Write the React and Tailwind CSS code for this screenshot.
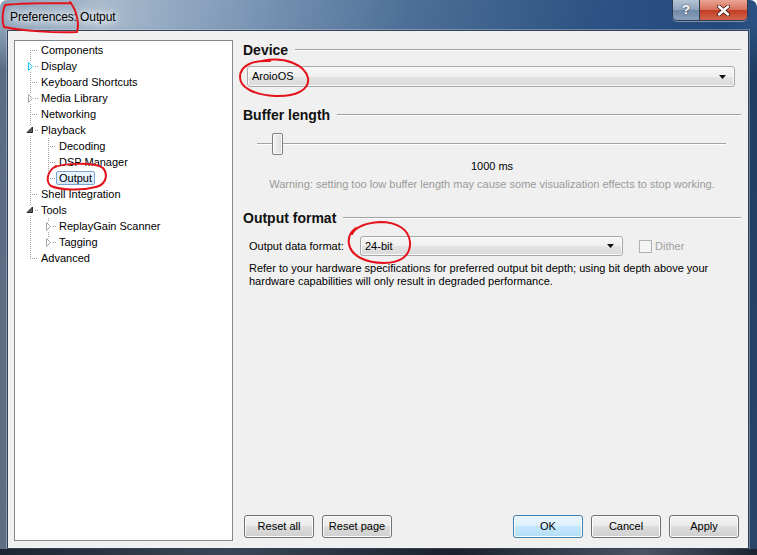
import React from 'react';

const treeRows = [
  { label: 'Components', level: 0, first: true },
  { label: 'Display', level: 0, exp: 'hover' },
  { label: 'Keyboard Shortcuts', level: 0 },
  { label: 'Media Library', level: 0, exp: 'closed' },
  { label: 'Networking', level: 0 },
  { label: 'Playback', level: 0, exp: 'open' },
  { label: 'Decoding', level: 1 },
  { label: 'DSP Manager', level: 1 },
  { label: 'Output', level: 1, lastChild: true, selected: true },
  { label: 'Shell Integration', level: 0 },
  { label: 'Tools', level: 0, exp: 'open' },
  { label: 'ReplayGain Scanner', level: 1, exp: 'closed' },
  { label: 'Tagging', level: 1, exp: 'closed', lastChild: true },
  { label: 'Advanced', level: 0, last: true },
];

const dot = { stroke: '#a0a0a0', strokeWidth: 1, strokeDasharray: '1 1', shapeRendering: 'crispEdges' };

function TreeGlyph({ row }) {
  const w = row.level === 0 ? 23 : 41;
  const cx = row.level === 0 ? 15.5 : 33.5;
  return (
    <svg width={w} height="16" className="shrink-0">
      <line x1="15.5" x2="15.5" y1={row.first ? 8 : 0} y2={row.last ? 9 : 16} {...dot} />
      {row.level === 1 && <line x1="33.5" x2="33.5" y1="0" y2={row.lastChild ? 9 : 16} {...dot} />}
      <line x1={row.exp ? cx + 4 : cx + 1} x2={w} y1="8.5" y2="8.5" {...dot} />
      {row.exp && <rect x={cx - 3.5} y="3" width="7" height="11" fill="#fff" />}
      {row.exp === 'closed' && (
        <polygon points={`${cx - 2},4.5 ${cx + 2},8.5 ${cx - 2},12.5`} fill="#fff" stroke="#a6a6a6" />
      )}
      {row.exp === 'hover' && (
        <polygon points={`${cx - 2},4.5 ${cx + 2},8.5 ${cx - 2},12.5`} fill="#e5f8ff" stroke="#1cc4f7" />
      )}
      {row.exp === 'open' && (
        <polygon points={`${cx + 2},5 ${cx + 2},10.5 ${cx - 3.5},10.5`} fill="#595959" stroke="#262626" strokeLinejoin="round" />
      )}
    </svg>
  );
}

function Section({ title }) {
  return (
    <div className="flex items-center h-[20px]">
      <span className="text-[14px] font-bold text-[#111] leading-[20px]">{title}</span>
      <div className="flex-1 ml-[7px] border-t border-[#a0a0a0] border-b border-b-white" />
    </div>
  );
}

function Combo({ value, className }) {
  return (
    <div className={"flex items-center justify-between pl-[4px] pr-[8px] border border-[#a8a8a8] rounded-[3px] shadow-[inset_0_0_0_1px_#fafafa] bg-[linear-gradient(#f6f6f6_0%,#efefef_50%,#e3e3e3_50%,#dadada_100%)] text-[11px] text-black " + className}>
      <span>{value}</span>
      <svg width="7" height="4"><path d="M0 0h7L3.5 4z" fill="#111" /></svg>
    </div>
  );
}

function Btn({ children, primary }) {
  return (
    <button
      className={
        "w-[70px] h-[23px] rounded-[3px] border text-[11px] text-black shadow-[inset_0_0_0_1px_#fcfcfc] " +
        (primary
          ? "border-[#3c7fb1] bg-[linear-gradient(#eaf6fd_0%,#dcf1fd_50%,#c4e7fc_50%,#b3def7_100%)]"
          : "border-[#707070] bg-[linear-gradient(#f2f2f2_0%,#ebebeb_50%,#dddddd_50%,#cfcfcf_100%)]")
      }
    >
      {children}
    </button>
  );
}

export default function App() {
  return (
    <div className="relative w-[757px] h-[555px] overflow-hidden flex flex-col rounded-t-[7px] bg-[linear-gradient(180deg,rgba(20,35,60,0)_0px,rgba(20,35,60,0)_26px,rgba(20,35,60,0.45)_70px,rgba(20,35,60,0.5)_100%),linear-gradient(100deg,#8da3bb_0%,#a9bbcd_12%,#7f99b7_28%,#4d6f97_48%,#2c5383_70%,#22497a_85%,#3f6794_100%)] font-['Liberation_Sans',Arial,sans-serif]">
      {/* Title bar */}
      <div className="h-[30px] flex justify-between shrink-0">
        <div className="pl-[10px] pt-[10px] text-[12px] leading-[15px] tracking-[-0.1px] text-black [text-shadow:0_0_10px_#fff,0_0_14px_#fff,0_0_6px_#fff]">
          Preferences: Output
        </div>
        <div className="flex mr-[9px] h-[21px] border border-t-0 border-[#2b3a4f] rounded-b-[5px] overflow-hidden shadow-[0_1px_0_rgba(255,255,255,0.4)]">
          <div className="w-[27px] flex items-center justify-center text-white font-bold text-[13px] bg-[linear-gradient(#b4c4d6_0%,#8ea3bd_50%,#6f88a6_50%,#8aa2be_100%)] border-r border-[#2b3a4f] [text-shadow:0_0_2px_#334]">
            ?
          </div>
          <div className="w-[47px] flex items-center justify-center bg-[linear-gradient(#e8a493_0%,#d7705b_50%,#c13d24_50%,#d2654a_100%)]">
            <svg width="13" height="11" viewBox="0 0 13 11">
              <path d="M2 1.5l9 8M11 1.5l-9 8" stroke="#3a1a14" strokeWidth="4" strokeLinecap="round" />
              <path d="M2 1.5l9 8M11 1.5l-9 8" stroke="#fff" strokeWidth="2.4" strokeLinecap="round" />
            </svg>
          </div>
        </div>
      </div>

      {/* Client area */}
      <div className="ml-[7px] w-[742px] h-[519px] shrink-0 border border-[#344156] shadow-[0_0_0_1px_rgba(220,230,240,0.35)] bg-[#f0f0f0] flex pt-[9px] pb-[7px] pl-[6px] pr-[7px]">
        {/* Tree */}
        <div className="w-[219px] h-[501px] shrink-0 border border-[#828790] bg-white pt-[1px] text-[11px] text-black">
          {treeRows.map((row) => (
            <div key={row.label} className="flex items-center h-[16px]">
              <TreeGlyph row={row} />
              <span
                className={
                  "px-[2px] border rounded-[2px] leading-[12px] whitespace-nowrap " +
                  (row.selected
                    ? "border-[#7da2ce] bg-[linear-gradient(#eef6fe,#d6e8fb)]"
                    : "border-transparent")
                }
              >
                {row.label}
              </span>
            </div>
          ))}
        </div>

        {/* Right page */}
        <div className="flex-1 ml-[10px] flex flex-col pb-[3px] text-[11px] text-black">
          <Section title="Device" />
          <Combo value="AroioOS" className="mt-[6px] ml-[4px] mr-[6px] h-[21px]" />

          <div className="mt-[18px]">
            <Section title="Buffer length" />
          </div>
          <div className="relative mt-[8px] h-[22px] ml-[14px] mr-[15px] flex items-center">
            <div className="w-full border-t border-[#a3a3a3] border-b border-b-white" />
            <div className="absolute left-[15px] top-0 w-[11px] h-[22px] rounded-[2px] border border-[#808080] shadow-[inset_0_0_0_1px_#fafafa] bg-[linear-gradient(90deg,#f4f4f4,#dcdcdc)]" />
          </div>
          <div className="mt-[5px] leading-[13px] text-center">1000 ms</div>
          <div className="mt-[5px] leading-[13px] text-center text-[#9a9a9a]">
            Warning: setting too low buffer length may cause some visualization effects to stop working.
          </div>

          <div className="mt-[17px]">
            <Section title="Output format" />
          </div>
          <div className="mt-[8px] h-[20px] flex items-center ml-[6px]">
            <span className="w-[111px] shrink-0">Output data format:</span>
            <Combo value="24-bit" className="w-[263px] h-[20px]" />
            <div className="ml-[16px] w-[13px] h-[13px] border border-[#b1b1b1] bg-[#f4f4f4]" />
            <span className="ml-[3px] text-[#a0a0a0]">Dither</span>
          </div>
          <p className="mt-[6px] ml-[6px] leading-[13px] whitespace-nowrap">
            Refer to your hardware specifications for preferred output bit depth; using bit depth above your
            <br />
            hardware capabilities will only result in degraded performance.
          </p>

          <div className="mt-auto flex items-center ml-[1px] mr-[2px]">
            <Btn>Reset all</Btn>
            <div className="ml-[8px]"><Btn>Reset page</Btn></div>
            <div className="ml-auto flex gap-[8px]">
              <Btn primary>OK</Btn>
              <Btn>Cancel</Btn>
              <Btn>Apply</Btn>
            </div>
          </div>
        </div>
      </div>

      {/* Bottom frame */}
      <div className="flex-1 bg-[linear-gradient(90deg,#1d2431,#3a4658_30%,#1a202c_60%,#4a5464_85%,#1d2431)]" />

      {/* Red hand-drawn annotations */}
      <svg className="absolute inset-0 pointer-events-none" width="757" height="555" viewBox="0 0 757 555">
        <g fill="none" stroke="#e3121b" strokeWidth="2" strokeLinecap="round" strokeLinejoin="round">
          <path d="M71,3 C52,3 22,3 5,5 C2,12 2,22 4,27 C22,31 55,33 77,32 C79,25 78,12 70,2" />
          <path d="M53,168 C62,163 95,162 103,168 C108,174 107,184 96,187 C80,191 60,190 51,186 C46,182 46,172 56,166" />
          <path d="M262,61 C285,56 305,65 308,78 C310,90 295,97 275,96 C255,95 240,88 240,77 C240,66 252,60 270,61" />
          <path d="M352,234 C356,226 366,223 380,222 C398,222 409,230 410,242 C411,256 400,263 384,263 C366,263 351,256 349,244 C348,238 350,232 356,228" />
        </g>
      </svg>
    </div>
  );
}
